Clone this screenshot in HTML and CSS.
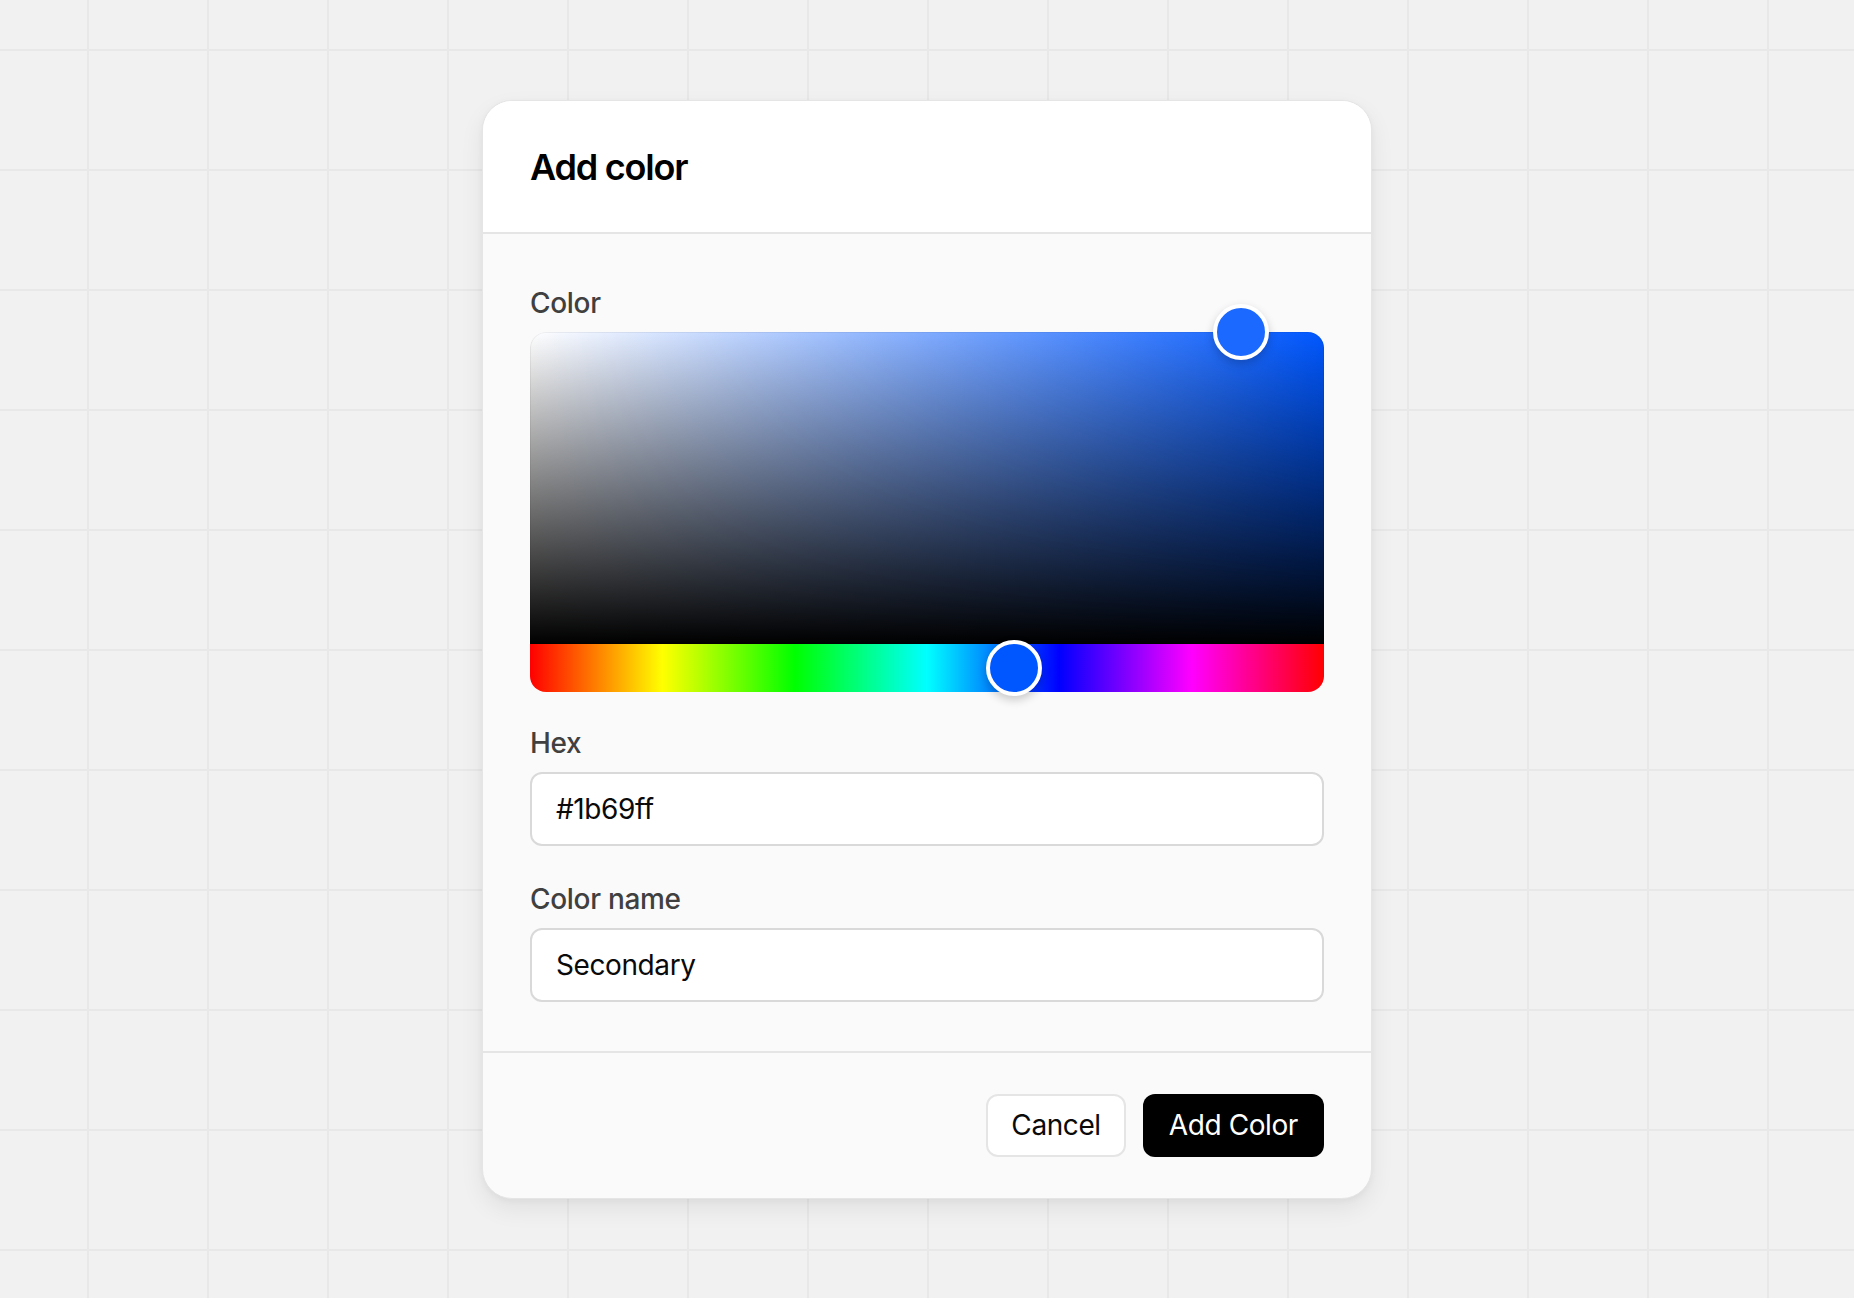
FILE: index.html
```html
<!DOCTYPE html>
<html lang="en">
  <head>
    <meta charset="UTF-8" />
    <meta name="viewport" content="width=device-width, initial-scale=1.0" />
    <title>Add color</title>
    <link rel="stylesheet" href="styles.css">
  </head>
  <body>
    <div class="dialog">
      <header class="dialog-header">
        <h1>Add color</h1>
      </header>
      <main class="dialog-body">
        <div class="field field-picker">
          <label class="field-label">Color</label>
          <div class="picker">
            <div class="picker-area" style="--hue: #0057ff">
              <span class="thumb thumb-area" style="left: 89.6%; top: 0%; background: #1b69ff"></span>
            </div>
            <div class="picker-hue">
              <span class="thumb thumb-hue" style="left: 60.9%; background: #0057ff"></span>
            </div>
          </div>
        </div>
        <div class="field">
          <label class="field-label" for="hex">Hex</label>
          <input id="hex" class="text-input" type="text" value="#1b69ff" />
        </div>
        <div class="field">
          <label class="field-label" for="color-name">Color name</label>
          <input id="color-name" class="text-input" type="text" value="Secondary" />
        </div>
      </main>
      <footer class="dialog-footer">
        <button class="btn btn-secondary">Cancel</button>
        <button class="btn btn-primary">Add Color</button>
      </footer>
    </div>
  </body>
</html>
```

FILE: styles.css
```css
body {
  font-family: Inter, "Noto Sans", sans-serif;
  margin: 0;
  padding: 0;
  height: 100vh;
  display: flex;
  justify-content: center;
  align-items: center;
  background-color: #f1f1f1;
  background-image:
    linear-gradient(to right, #e8e8e8 2px, transparent 2px),
    linear-gradient(to bottom, #e8e8e8 2px, transparent 2px);
  background-size: 120px 120px;
  background-position: 87px 49px;
}

.dialog {
  width: 890px;
  box-sizing: border-box;
  background-color: #fafafa;
  border: 1px solid #e5e5e5;
  border-radius: 30px;
  overflow: hidden;
  box-shadow: 0 10px 24px rgba(0, 0, 0, 0.07), 0 2px 6px rgba(0, 0, 0, 0.04);
}

.dialog-header {
  background-color: #fff;
  padding: 44px 47px 43px;
  border-bottom: 2px solid #e5e5e5;
}

.dialog-header h1 {
  margin: 0;
  font-size: 36px;
  line-height: 44px;
  font-weight: 600;
  letter-spacing: -1.2px;
  color: #000;
}

.dialog-body {
  display: flex;
  flex-direction: column;
  gap: 36px;
  padding: 52px 47px 49px;
  border-bottom: 2px solid #e5e5e5;
}

.field {
  display: flex;
  flex-direction: column;
  gap: 12px;
}

.field-picker {
  margin-bottom: -2px;
}

.field-label {
  font-size: 28px;
  line-height: 34px;
  font-weight: 500;
  color: #404040;
  letter-spacing: -0.3px;
}

.picker {
  position: relative;
  border-radius: 16px;
}

.picker-area {
  position: relative;
  height: 312px;
  border-radius: 16px 16px 0 0;
  background:
    linear-gradient(to top, #000, rgba(0, 0, 0, 0)),
    linear-gradient(to right, #fff, var(--hue));
  box-shadow: inset 0 0 0 1px rgba(0, 0, 0, 0.06);
}

.picker-hue {
  position: relative;
  height: 48px;
  border-radius: 0 0 16px 16px;
  background: linear-gradient(
    to right,
    #ff0000 0%,
    #ffff00 16.67%,
    #00ff00 33.33%,
    #00ffff 50%,
    #0000ff 66.67%,
    #ff00ff 83.33%,
    #ff0000 100%
  );
}

.thumb {
  position: absolute;
  width: 56px;
  height: 56px;
  box-sizing: border-box;
  border: 4px solid #fff;
  border-radius: 50%;
  transform: translate(-50%, -50%);
  box-shadow: 0 4px 10px rgba(0, 0, 0, 0.2);
}

.thumb-hue {
  top: 50%;
}

.text-input {
  height: 74px;
  box-sizing: border-box;
  padding: 0 24px;
  font-family: inherit;
  font-size: 28px;
  letter-spacing: -0.4px;
  color: #0a0a0a;
  background-color: #fff;
  border: 2px solid #d9d9d9;
  border-radius: 12px;
  outline: none;
}

.dialog-footer {
  display: flex;
  justify-content: flex-end;
  gap: 17px;
  padding: 41px 47px 41px;
}

.btn {
  height: 63px;
  padding: 0 25px;
  font-family: inherit;
  font-size: 28px;
  font-weight: 400;
  border-radius: 12px;
  cursor: pointer;
  letter-spacing: -0.4px;
}

.btn-secondary {
  background-color: #fff;
  color: #0a0a0a;
  border: 2px solid #e5e5e5;
  padding: 0 23px;
}

.btn-primary {
  background-color: #000;
  color: #fff;
  border: none;
  padding: 0 26px;
}
```
